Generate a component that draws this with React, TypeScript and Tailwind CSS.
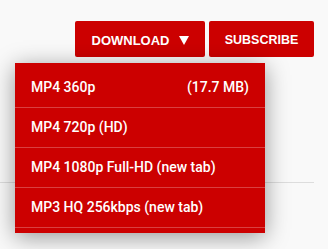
import React from "react";

const items: { label: string; right?: string }[] = [
  { label: "MP4 360p", right: "(17.7 MB)" },
  { label: "MP4 720p (HD)" },
  { label: "MP4 1080p Full-HD (new tab)" },
  { label: "MP3 HQ 256kbps (new tab)" },
];

export default function App() {
  return (
    <div
      className="relative w-[328px] h-[249px] overflow-hidden bg-[#f9f9f9]"
      style={{ fontFamily: "Roboto, 'Liberation Sans', sans-serif" }}
    >
      <div className="flex justify-end gap-[4px] pr-[14px] pt-[21px] font-['Liberation_Sans',Arial,sans-serif]">
        <button className="flex h-[36px] w-[130px] items-center justify-center rounded-[2px] bg-[#cc0000] pt-[3px] text-[13px] font-bold uppercase text-white">
          <span>Download</span>
          <svg className="ml-[9px]" width="10" height="9" viewBox="0 0 10 9">
            <path d="M0 0 H10 L5 9 Z" fill="white" />
          </svg>
        </button>
        <button className="flex h-[36px] w-[105px] items-center justify-center rounded-[2px] bg-[#cc0000] pt-[3px] text-[12.5px] font-bold uppercase text-white">
          Subscribe
        </button>
      </div>
      <div className="mt-[125px] w-[314px] border-b border-[#dddddd]" />
      <div className="absolute left-[15px] top-[63px] w-[250px] bg-[#cc0000] py-[5px] shadow-[0_4px_22px_rgba(0,0,0,0.4)]">
        {items.map((it) => (
          <div
            key={it.label}
            className="flex h-[40px] items-center justify-between border-b border-white/25 px-[16px] text-[14px] font-medium text-white"
          >
            <span>{it.label}</span>
            {it.right && <span>{it.right}</span>}
          </div>
        ))}
      </div>
    </div>
  );
}
